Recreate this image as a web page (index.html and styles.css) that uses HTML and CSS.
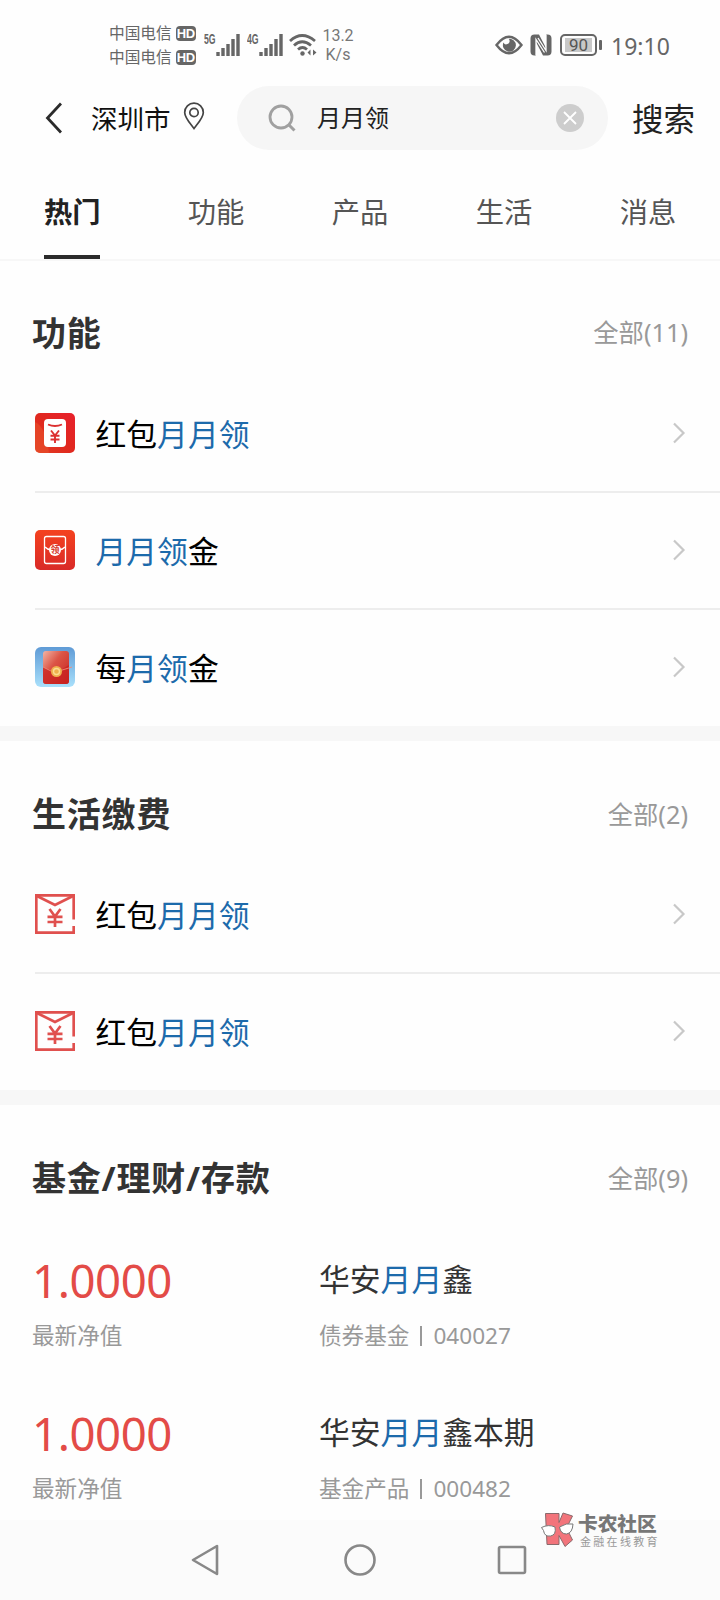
FILE: index.html
```html
<!DOCTYPE html>
<html lang="zh-CN">
<head>
<meta charset="utf-8">
<title>搜索</title>
<link rel="stylesheet" href="styles.css">
</head>
<body>
<svg class="defs" width="0" height="0" aria-hidden="true">
  <defs>
    <linearGradient id="redA" x1="0" y1="1" x2="1" y2="0"><stop offset="0" stop-color="#e23d22"/><stop offset=".5" stop-color="#e0281f"/><stop offset="1" stop-color="#e8202c"/></linearGradient>
    <linearGradient id="redB" x1="0" y1="0" x2="0" y2="1"><stop offset="0" stop-color="#f4421f"/><stop offset="1" stop-color="#d92a28"/></linearGradient>
    <linearGradient id="sky" x1="0" y1="0" x2="0" y2="1"><stop offset="0" stop-color="#5f9bd6"/><stop offset="1" stop-color="#a9e0fb"/></linearGradient>
    <linearGradient id="env" x1="0" y1="0" x2="1" y2="1"><stop offset="0" stop-color="#f2b5a5"/><stop offset=".4" stop-color="#dc5546"/><stop offset="1" stop-color="#c4201f"/></linearGradient>
    <symbol id="chevron" viewBox="0 0 14 22"><path d="M2 1.500 11.500 11 2 20.500" fill="none" stroke="#c8c8c8" stroke-width="2.200"/></symbol>
    <symbol id="mail" viewBox="0 0 40 40"><g fill="none" stroke="#e0504e" stroke-width="2.700"><path d="M38.700 25.500V1.300H1.300v37.400h37.400V32"/><path d="M2 2l18 9L38 2"/><path d="M14.500 15 20 22.500l5.500-7.500M20 22v11M12.500 22.800h15M12.500 28h15"/></g></symbol>
    <symbol id="bars" viewBox="0 0 24 23"><path d="M2 19v4M7 15v8M12 11v12M17 6v17M22 1v22" stroke="#666" stroke-width="3.400"/></symbol>
  </defs>
</svg>
<div class="screen">
  <div class="status">
    <div class="carriers">
      <div class="carrier"><span>中国电信</span><b class="hd">HD</b></div>
      <div class="carrier"><span>中国电信</span><b class="hd">HD</b></div>
    </div>
    <div class="signal"><span class="gen">5G</span><svg width="24" height="23"><use href="#bars"/></svg></div>
    <div class="signal second"><span class="gen">4G</span><svg width="24" height="23"><use href="#bars"/></svg></div>
    <svg class="wifi" width="28" height="24" viewBox="0 0 28 24"><g fill="none" stroke="#666" stroke-width="2.800"><path d="M1 8Q13 -3 26 8"/><path d="M5 12.500Q13 5 22 12.500"/><path d="M9 16.500Q13.500 12.500 18 16.500"/></g><circle cx="13.500" cy="20.500" r="2.200" fill="#666"/><path d="M21.500 16.500v6l-3-3zM24 16.500v6l3.500-3z" fill="#666"/></svg>
    <div class="speed"><div>13.2</div><div>K/s</div></div>
    <svg class="eye" width="28" height="20" viewBox="0 0 28 20"><path d="M1.500 10Q14-6.500 26.500 10 14 26.500 1.500 10Z" fill="none" stroke="#666" stroke-width="2.400"/><path d="M13.500 3.800a3 3 0 0 1-1 5.200 3 3 0 0 1-4-1.500A6.500 6.500 0 1 0 13.500 3.800Z" fill="#666"/></svg>
    <svg class="nfc" width="22" height="22" viewBox="0 0 22 22"><path d="M5 .5H9L16 14V.5h1.500a4 4 0 0 1 4 4v13a4 4 0 0 1-4 4H13L6 8v13.500H4.500a4 4 0 0 1-4-4v-13a4 4 0 0 1 4-4Z" fill="#666"/><path d="M6 21.500V5.500l8.500 13M16 .5v16L8 4" fill="none" stroke="#fff" stroke-width="1.300"/></svg>
    <div class="battery"><span>90</span></div><i class="nub"></i>
    <div class="clock">19:10</div>
  </div>

  <div class="header">
    <svg class="back" width="17" height="32" viewBox="0 0 17 32"><path d="M16 1.500 2.500 16 16 30.500" fill="none" stroke="#2b2b2b" stroke-width="2.800"/></svg>
    <span class="city">深圳市</span>
    <svg class="pin" width="22" height="28" viewBox="0 0 22 28"><path d="M11 26.500C6 20 1.700 15.500 1.700 10.500a9.300 9.300 0 0 1 18.600 0C20.300 15.500 16 20 11 26.500Z" fill="none" stroke="#444" stroke-width="1.700"/><circle cx="11" cy="10.500" r="4.200" fill="none" stroke="#444" stroke-width="1.700"/></svg>
    <div class="searchbox">
      <svg width="28" height="28" viewBox="0 0 28 28"><circle cx="13" cy="13" r="11" fill="none" stroke="#a0a0a0" stroke-width="2.800"/><path d="m20.500 20.500 6 6" stroke="#a0a0a0" stroke-width="3"/></svg>
      <span class="query">月月领</span>
      <svg class="clear" width="28" height="28" viewBox="0 0 28 28"><circle cx="14" cy="14" r="14" fill="#cdcdcd"/><path d="m8 8 12 12M20 8 8 20" stroke="#fff" stroke-width="1.800"/></svg>
    </div>
    <span class="go">搜索</span>
  </div>

  <div class="tabs">
    <div class="tab active"><span>热门</span></div>
    <div class="tab"><span>功能</span></div>
    <div class="tab"><span>产品</span></div>
    <div class="tab"><span>生活</span></div>
    <div class="tab"><span>消息</span></div>
  </div>

  <section>
    <div class="head first"><h2>功能</h2><span class="all">全部(11)</span></div>
    <div class="row">
      <svg width="40" height="40" viewBox="0 0 40 40"><rect width="40" height="40" rx="5" fill="url(#redA)"/><path d="M0 9Q11 14 14 40H5a5 5 0 0 1-5-5Z" fill="#e8502b" opacity=".6"/><rect x="9" y="6" width="22" height="28" rx="4" fill="#fff"/><path d="M13 11.500q7 3 14 0M16 17.500l4 5 4-5M20 22.500V30M15.500 22.800h9M15.500 26.500h9" fill="none" stroke="#dc3030" stroke-width="1.900"/></svg>
      <span class="label">红包<em>月月领</em></span><svg class="chev" width="14" height="22"><use href="#chevron"/></svg>
    </div>
    <div class="row">
      <svg width="40" height="40" viewBox="0 0 40 40"><rect width="40" height="40" rx="5" fill="url(#redB)"/><rect x="9.500" y="6.500" width="21" height="27" rx="2" fill="none" stroke="#fff" stroke-width="1.300"/><path d="M10 17q3 3 6 2.500M30 17q-3 3-6 2.500" fill="none" stroke="#fff" stroke-width="1.500"/><circle cx="20" cy="20" r="6" fill="#fff"/><text x="20" y="23.200" text-anchor="middle" class="seal">领</text></svg>
      <span class="label"><em>月月领</em>金</span><svg class="chev" width="14" height="22"><use href="#chevron"/></svg>
    </div>
    <div class="row">
      <svg width="40" height="40" viewBox="0 0 40 40"><rect width="40" height="40" rx="6" fill="url(#sky)"/><rect x="8" y="4" width="26" height="33" rx="3" fill="url(#env)"/><path d="M8 20q10 5 16 4l10-6v16a3 3 0 0 1-3 3H11a3 3 0 0 1-3-3Z" fill="#c9211f" opacity=".7"/><path d="m8 20 8 4 8 0 13-4" fill="none" stroke="#f08b78" stroke-width=".9"/><circle cx="21.500" cy="24.500" r="5.500" fill="#efb04d"/><circle cx="21.500" cy="24.500" r="3" fill="none" stroke="#fbdc92" stroke-width="1.400"/></svg>
      <span class="label">每<em>月领</em>金</span><svg class="chev" width="14" height="22"><use href="#chevron"/></svg>
    </div>
  </section>

  <section>
    <div class="head"><h2>生活缴费</h2><span class="all">全部(2)</span></div>
    <div class="row"><svg width="40" height="40"><use href="#mail"/></svg><span class="label">红包<em>月月领</em></span><svg class="chev" width="14" height="22"><use href="#chevron"/></svg></div>
    <div class="row"><svg width="40" height="40"><use href="#mail"/></svg><span class="label">红包<em>月月领</em></span><svg class="chev" width="14" height="22"><use href="#chevron"/></svg></div>
  </section>

  <section class="funds">
    <div class="head"><h2>基金/理财/存款</h2><span class="all">全部(9)</span></div>
    <div class="fund">
      <div class="value">1.0000</div><div class="name">华安<em>月月</em>鑫</div>
      <div class="note">最新净值</div><div class="note">债券基金<i class="sep"></i>040027</div>
    </div>
    <div class="fund">
      <div class="value">1.0000</div><div class="name">华安<em>月月</em>鑫本期</div>
      <div class="note">最新净值</div><div class="note">基金产品<i class="sep"></i>000482</div>
    </div>
  </section>

  <div class="navbar">
    <svg width="28" height="32" viewBox="0 0 28 32"><path d="M26 2v28L2 16Z" fill="none" stroke="#888" stroke-width="2.600" stroke-linejoin="round"/></svg>
    <svg width="32" height="32" viewBox="0 0 32 32"><circle cx="16" cy="16" r="14.500" fill="none" stroke="#888" stroke-width="2.600"/></svg>
    <svg width="30" height="30" viewBox="0 0 30 30"><rect x="2" y="2" width="26" height="26" rx="1.500" fill="none" stroke="#888" stroke-width="2.600"/></svg>
  </div>

  <div class="watermark">
    <svg width="34" height="36" viewBox="0 0 34 36"><path d="M4.500 1.500h13.500v9l4-9.500 9.500 3-6 12 6 12-7.500 6.500-6-11v9H6Z" fill="#f2747b" stroke="#8a6a6c" stroke-width="1"/><path d="M.5 15.500q7-3.500 13.500-.5 1.500 8-4.500 9T2.500 18.500ZM18.500 15q7-4.500 13.500-3-.5 9-6.500 10-6 0-7-7Z" fill="#fff" stroke="#777" stroke-width="1"/></svg>
    <div><div class="brand">卡农社区</div><div class="motto">金融在线教育</div></div>
  </div>
</div>
</body>
</html>
```
FILE: styles.css
```css
* { box-sizing: border-box; }
body {
  margin: 0;
  background: #fefefe;
  color: #333;
  font-family: "Noto Sans", "Noto Sans CJK SC", sans-serif;
}
svg { display: block; flex: none; }
.defs { position: absolute; }
em { font-style: normal; color: #1c6aab; }
.screen {
  position: relative;
  width: 720px;
  height: 1600px;
  overflow: hidden;
  display: flex;
  flex-direction: column;
}

/* status bar */
.status {
  height: 86px;
  flex: none;
  display: flex;
  align-items: flex-start;
  padding-left: 109px;
  color: #666;
}
.carriers { padding-top: 21px; width: 95px; }
.carrier { display: flex; align-items: center; gap: 4px; height: 24px; font-size: 15.700px; line-height: 24px; white-space: nowrap; }
.hd {
  width: 20px; height: 15px; border-radius: 4px;
  background: #666; color: #fff;
  font: bold 13px/15px "Liberation Sans", sans-serif;
  letter-spacing: -.3px;
  text-align: center;
}
.signal { display: flex; width: 36px; padding-top: 33px; }
.signal.second { margin-left: 7px; }
.gen { width: 12px; flex: none; font: bold 14px/12px "Liberation Sans", sans-serif; transform: scaleX(.62); transform-origin: left; white-space: nowrap; }
.wifi { margin: 33px 0 0 6px; }
.speed { margin: 26px 0 0 5px; width: 32px; font: 16px/19px Roboto, sans-serif; text-align: center; color: #777; }
.eye { margin: 35px 0 0 141px; }
.nfc { margin: 34px 0 0 7px; }
.battery {
  margin: 34px 0 0 8px;
  width: 37px; height: 22px;
  border: 2px solid #666; border-radius: 5px;
  padding: 2px 3px;
}
.battery span { display: block; height: 14px; background: #c8c8c8; font: 17px/15px Roboto, sans-serif; text-align: center; color: #555; }
.nub { width: 3px; height: 10px; margin: 40px 0 0 2px; background: #666; border-radius: 1px; }
.clock { margin: 31px 0 0 9px; font-size: 23px; line-height: 30px; }

/* search header */
.header { height: 64px; flex: none; display: flex; align-items: center; padding-left: 45px; }
.city { margin-left: 29px; width: 80px; font-size: 26.500px; line-height: 40px; margin-top: 1px; color: #111; white-space: nowrap; }
.pin { margin: -5px 0 0 12px; }
.searchbox {
  margin-left: 32px;
  width: 371px; height: 64px;
  border-radius: 32px;
  background: #f6f6f6;
  display: flex; align-items: center;
  padding: 0 24px 0 31px;
}
.query { margin-left: 21px; font-size: 24px; line-height: 40px; color: #222; }
.clear { margin-left: auto; }
.go { margin-left: 24px; margin-top: 1px; font-size: 31.500px; line-height: 48px; color: #222; white-space: nowrap; }

/* tabs */
.tabs { height: 111px; flex: none; display: flex; border-bottom: 2px solid #f7f7f7; }
.tab { width: 144px; display: flex; justify-content: center; font-size: 28.300px; line-height: 40px; padding-top: 42px; color: #555; }
.tab.active { font-weight: bold; color: #222; }
.tab.active span { border-bottom: 4px solid #2b2b2b; height: 67px; width: 56px; white-space: nowrap; }

/* result groups */
section { flex: none; border-bottom: 15px solid #f7f7f7; }
.funds { border: 0; }
.head { height: 115px; display: flex; justify-content: space-between; align-items: center; padding: 31px 32px 0 32px; }
.head.first { height: 114px; padding-top: 29px; }
h2 { margin: 0; font-size: 34px; line-height: 48px; font-weight: bold; letter-spacing: .8px; }
.all { font-size: 25.300px; line-height: 40px; margin-top: -1px; color: #999; }
.row { height: 117px; display: flex; align-items: center; margin-left: 35px; padding: 0 34px 1px 0; border-bottom: 1px solid #ededed; box-shadow: 0 1px 0 #ededed; }
.row:last-child { border-bottom-color: transparent; box-shadow: none; }
.label { margin-left: 20.500px; margin-top: 2px; font-size: 30.800px; line-height: 48px; color: #000; }
.chev { margin-left: auto; }
.seal { font-size: 9px; font-weight: bold; fill: #d83a2a; }

.funds .head { margin-bottom: 30px; }
.fund { display: grid; grid-template-columns: 287px 1fr; grid-template-rows: 60px 93px; padding-left: 32px; }
.value { font-size: 45.500px; line-height: 60px; letter-spacing: -.4px; color: #e34b47; }
.name { font-size: 30.800px; line-height: 58px; }
.note { font-size: 22.600px; line-height: 50px; color: #999; display: flex; align-items: center; height: 50px; padding-top: 2px; }
.sep { width: 2px; height: 20px; background: #999; margin: 0 11px; }

/* system navigation */
.navbar {
  position: absolute; left: 0; right: 0; bottom: 0;
  height: 80px;
  background: #fbfbfb;
  display: flex; align-items: center;
  padding-left: 191px;
  gap: 125px;
}
.navbar svg:last-child { margin-left: -4px; }
.watermark { position: absolute; left: 541px; top: 1512px; display: flex; gap: 3px; }
.brand { font-size: 19.700px; line-height: 24px; font-weight: 900; color: #777; }
.motto { margin-left: 2px; font-size: 11px; line-height: 12px; letter-spacing: 2.300px; color: #999; white-space: nowrap; }
```
